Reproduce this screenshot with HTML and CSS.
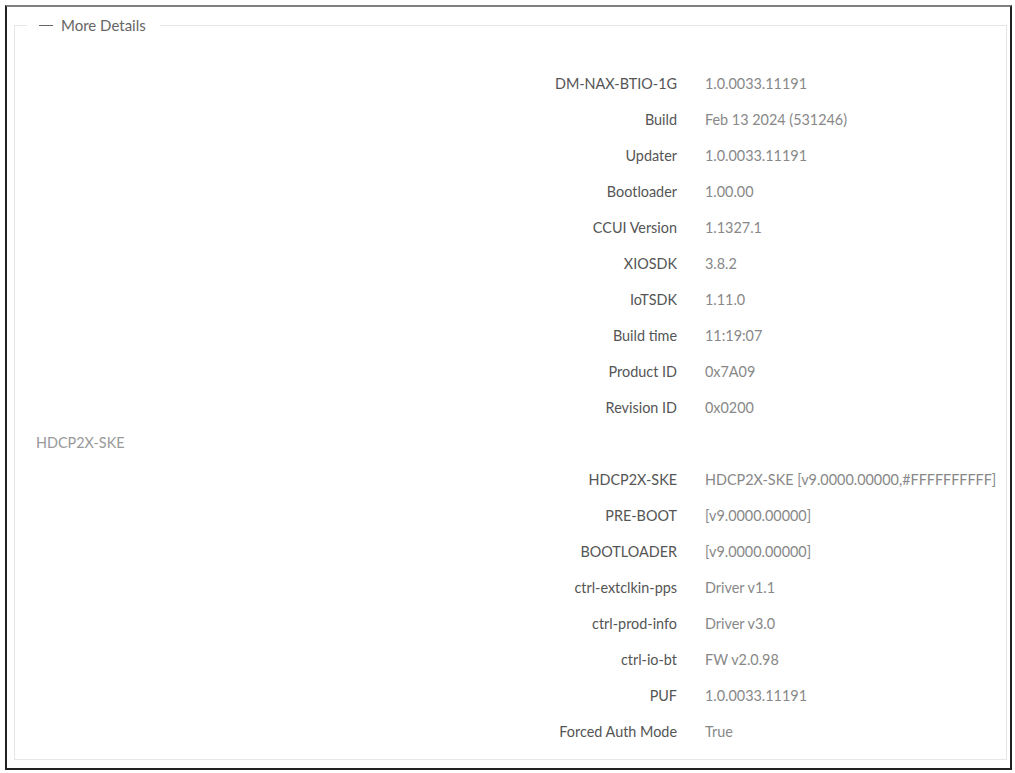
FILE: index.html
```html
<!DOCTYPE html>
<html>
<head>
<meta charset="utf-8">
<link rel="stylesheet" href="styles.css">
</head>
<body>
<div class="frame">
  <fieldset class="details">
    <legend class="legend"><span class="dash"></span>More Details</legend>
    <div class="list">
      <div class="row"><span class="label">DM-NAX-BTIO-1G</span><span class="value">1.0.0033.11191</span></div>
      <div class="row"><span class="label">Build</span><span class="value">Feb 13 2024 (531246)</span></div>
      <div class="row"><span class="label">Updater</span><span class="value">1.0.0033.11191</span></div>
      <div class="row"><span class="label">Bootloader</span><span class="value">1.00.00</span></div>
      <div class="row"><span class="label">CCUI Version</span><span class="value">1.1327.1</span></div>
      <div class="row"><span class="label">XIOSDK</span><span class="value">3.8.2</span></div>
      <div class="row"><span class="label">IoTSDK</span><span class="value">1.11.0</span></div>
      <div class="row"><span class="label">Build time</span><span class="value">11:19:07</span></div>
      <div class="row"><span class="label">Product ID</span><span class="value">0x7A09</span></div>
      <div class="row"><span class="label">Revision ID</span><span class="value">0x0200</span></div>
      <div class="group">HDCP2X-SKE</div>
      <div class="row"><span class="label">HDCP2X-SKE</span><span class="value">HDCP2X-SKE [v9.0000.00000,#FFFFFFFFFF]</span></div>
      <div class="row"><span class="label">PRE-BOOT</span><span class="value">[v9.0000.00000]</span></div>
      <div class="row"><span class="label">BOOTLOADER</span><span class="value">[v9.0000.00000]</span></div>
      <div class="row"><span class="label">ctrl-extclkin-pps</span><span class="value">Driver v1.1</span></div>
      <div class="row"><span class="label">ctrl-prod-info</span><span class="value">Driver v3.0</span></div>
      <div class="row"><span class="label">ctrl-io-bt</span><span class="value">FW v2.0.98</span></div>
      <div class="row"><span class="label">PUF</span><span class="value">1.0.0033.11191</span></div>
      <div class="row"><span class="label">Forced Auth Mode</span><span class="value">True</span></div>
    </div>
  </fieldset>
</div>
</body>
</html>
```
FILE: styles.css
```css
html, body {
  margin: 0;
  padding: 0;
  background: #ffffff;
}
body {
  font-family: Lato, "Open Sans", sans-serif;
  font-size: 14.4px;
}
.frame {
  box-sizing: border-box;
  margin: 5px 3px 0 5px;
  width: 1007px;
  height: 765px;
  border: 2px solid #222;
  border-top-color: #808080;
  padding: 9px 3px 8px 7px;
}
.details {
  box-sizing: border-box;
  margin: 0;
  height: 100%;
  border: 1px solid #e6e6e6;
  padding: 0;
  min-width: 0;
}
.legend {
  margin-left: 12px;
  padding: 0 14px 0 12px;
  color: #666;
  font-size: 15px;
  display: flex;
  align-items: center;
  gap: 8px;
  line-height: 18px;
}
.dash {
  display: inline-block;
  width: 14px;
  height: 1px;
  background: #666;
}
.list {
  padding: 31px 0 0 21px;
  display: flex;
  flex-direction: column;
}
.row {
  display: grid;
  grid-template-columns: 641px 1fr;
  column-gap: 28px;
  height: 36px;
  align-items: center;
}
.label {
  text-align: right;
  color: #555;
}
.value {
  color: #888;
}
.group {
  height: 36px;
  line-height: 36px;
  color: #999;
}
```
